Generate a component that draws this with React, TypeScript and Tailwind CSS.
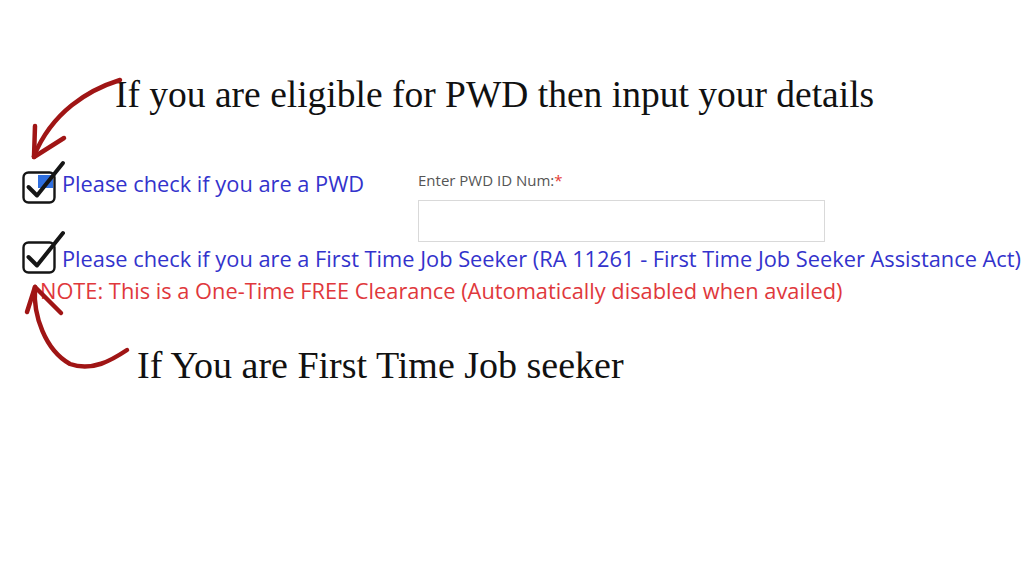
import React from 'react';

const serif = { fontFamily: '"Liberation Serif", "DejaVu Serif", serif' };
const sans = { fontFamily: '"Open Sans", "Noto Sans", sans-serif' };

// Hand-drawn style checkbox: rounded square with a heavy tick that overshoots the top-right corner
function TickBox({ tinted = false }: { tinted?: boolean }) {
  return (
    <svg width="46" height="46" viewBox="0 0 46 46" className="shrink-0">
      {tinted && <rect x="18" y="15" width="15" height="13" fill="#2f6fe0" />}
      <rect x="3.5" y="12.5" width="31" height="30" rx="5" fill="none" stroke="#151515" strokeWidth="2.4" />
      <path d="M8.5 27 L17 35.5 L43 3" fill="none" stroke="#151515" strokeWidth="4" strokeLinecap="round" strokeLinejoin="round" />
    </svg>
  );
}

// Red annotation arrows drawn over the form
function Arrows() {
  return (
    <svg className="pointer-events-none absolute inset-0" width="1024" height="576" viewBox="0 0 1024 576">
      <g fill="none" stroke="#a01515" strokeWidth="4.5" strokeLinecap="round" strokeLinejoin="round">
        <path d="M120 80 C 88 90, 52 112, 34 156" />
        <path d="M34 157 L 35 126" />
        <path d="M34 157 L 64 138" />
        <path d="M35 288 C 33 315, 45 350, 70 364 C 92 372, 112 360, 127 350" />
        <path d="M35 287 L 27 312" />
        <path d="M35 287 L 61 313" />
      </g>
    </svg>
  );
}

export default function App() {
  return (
    <div className="relative h-[576px] w-[1024px] overflow-hidden bg-white">
      <p className="pl-[115px] pt-[73px] text-[37.5px] leading-[44px] text-[#111]" style={serif}>
        If you are eligible for PWD then input your details
      </p>

      <div className="mt-[43px] flex items-start pl-[20px]">
        <div className="flex w-[398px] items-start">
          <TickBox tinted />
          <span className="-ml-[4px] pt-[9px] text-[21.8px] leading-[30px] text-[#3333cc]" style={sans}>
            Please check if you are a PWD
          </span>
        </div>
        <div className="flex flex-col pt-[10px]">
          <label className="text-[15px] leading-[20px] text-[#555]" style={sans}>
            Enter PWD ID Num:<span className="text-[#e53935]">*</span>
          </label>
          <div className="mt-[10px] h-[42px] w-[407px] border border-[#d9d9d9] bg-white" />
        </div>
      </div>

      <div className="-mt-[12px] flex items-start pl-[20px]">
        <TickBox />
        <span className="-ml-[4px] whitespace-nowrap pt-[14px] text-[21.8px] leading-[30px] text-[#3333cc]" style={sans}>
          Please check if you are a First Time Job Seeker (RA 11261 - First Time Job Seeker Assistance Act)
        </span>
      </div>

      <p className="pl-[40px] text-[21.8px] leading-[30px] text-[#e0383c]" style={sans}>
        NOTE: This is a One-Time FREE Clearance (Automatically disabled when availed)
      </p>

      <p className="pl-[137px] pt-[37px] text-[38px] leading-[44px] text-[#111]" style={serif}>
        If You are First Time Job seeker
      </p>

      <Arrows />
    </div>
  );
}
